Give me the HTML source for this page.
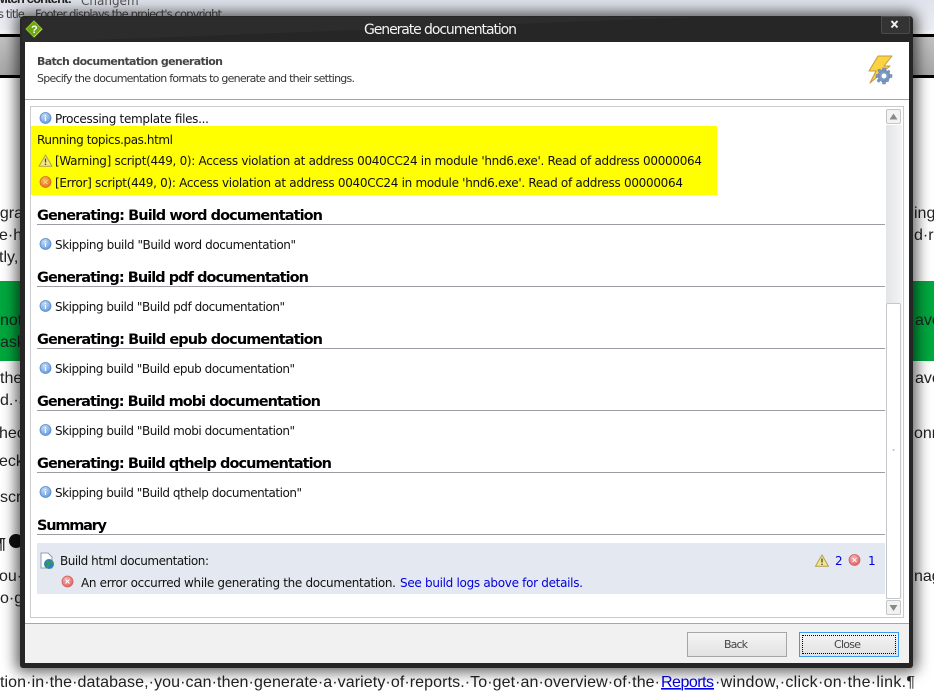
<!DOCTYPE html>
<html><head><meta charset="utf-8"><style>
html,body{margin:0;padding:0;width:934px;height:693px;overflow:hidden;background:#fff}
.a{position:absolute}
svg{position:absolute;left:0;top:0}
text{font-family:"DejaVu Sans","Liberation Sans",sans-serif;font-size:12px;fill:#111;white-space:pre}
.b{font-weight:bold;font-size:14.5px;fill:#000}
.bg{font-family:"Liberation Sans",sans-serif;font-size:16px;fill:#222}
.u{fill:#0000e0}
</style></head><body>
<div class="a" style="left:0;top:0;width:934px;height:30px;background:linear-gradient(#dfe3ec,#eceef3)"></div>
<div class="a" style="left:0;top:30px;width:934px;height:4px;background:#f4f4f6"></div>
<div class="a" style="left:0;top:34px;width:934px;height:44px;box-sizing:border-box;border-top:3px solid #000;border-bottom:3px solid #000;background:linear-gradient(#c2c2c2,#a6a6a6)"></div>
<div class="a" style="left:0;top:281px;width:934px;height:80px;background:#00a83e"></div>

<!-- background text, beneath the dialog and its shadow -->
<svg width="934" height="693" viewBox="0 0 934 693">
<text x="-5" y="3" textLength="77" style="font-family:'Liberation Sans',sans-serif;font-size:13px;font-weight:bold;fill:#222">witch content:</text><text x="81" y="5" style="font-size:12px;fill:#555">Changem</text>
<text x="-2" y="18" style="font-size:11.5px;fill:#444" textLength="224">s title    Footer displays the project's copyright</text>
<text x="-9" y="218" class="bg">ogram</text><text x="-1" y="240" class="bg">e·h</text><text x="-1" y="262" class="bg">tly,</text>
<text x="0" y="325" class="bg">not</text><text x="0" y="347" class="bg">ask</text><text x="0" y="383" class="bg">the</text><text x="0" y="405" class="bg">d.·S</text>
<text x="-1" y="438" class="bg">hec</text><text x="-1" y="466" class="bg">eck</text><text x="0" y="502" class="bg">scr</text>
<text x="-3" y="549" class="bg" style="font-weight:bold">¶</text><circle cx="16" cy="541" r="7" fill="#111"/>
<text x="-1" y="581" class="bg">ou·c</text><text x="0" y="603" class="bg">o·g</text>
<text x="914" y="218" class="bg">ing</text><text x="914" y="240" class="bg">d·re</text><text x="915" y="325" class="bg">ave</text><text x="915" y="383" class="bg">ave</text><text x="914" y="438" class="bg">onn</text><text x="914" y="581" class="bg">nag</text>
<text x="0" y="687" class="bg" textLength="660">tion·in·the·database,·you·can·then·generate·a·variety·of·reports.·To·get·an·overview·of·the·</text>
<text x="661" y="687" class="bg" textLength="53" style="fill:#0000e0;text-decoration:underline">Reports</text>
<text x="715" y="687" class="bg" textLength="200">·window,·click·on·the·link.¶</text>
</svg>

<div class="a" style="left:20px;top:16px;width:893px;height:652px;background:#262626;border-radius:4px 4px 3px 3px;box-shadow:0 0 14px 4px rgba(0,0,0,.62)"></div>
<div class="a" style="left:25px;top:42px;width:884px;height:621px;background:#fff"></div>
<div class="a" style="left:25px;top:99px;width:884px;height:1px;background:#a3a6a8"></div>
<div class="a" style="left:30px;top:106px;width:874px;height:512px;box-sizing:border-box;border:1px solid #c9cccf;background:#fff"></div>
<div class="a" style="left:25px;top:623px;width:884px;height:40px;box-sizing:border-box;border-top:1px solid #a3a8aa;background:#f1f1f1"></div>
<div class="a" style="left:881px;top:16px;width:27px;height:16px;background:#333;border:1px solid #4a4a4a;border-radius:0 0 2px 2px"></div>
<div class="a" style="left:31px;top:126px;width:686px;height:69px;background:#ff0"></div>
<div class="a" style="left:37px;top:543px;width:848px;height:51px;background:#e4e8f0"></div>
<div class="a" style="left:886px;top:125px;width:16px;height:474px;background:linear-gradient(90deg,#e4e5e7,#f4f4f5)"></div>
<div class="a" style="left:886px;top:109px;width:15px;height:15px;box-sizing:border-box;border:1px solid #c4c6c8;border-radius:2px;background:#f2f2f2"></div>
<div class="a" style="left:886px;top:303px;width:15px;height:296px;box-sizing:border-box;border:1px solid #c4c8cc;border-radius:2px;background:#fff"></div>
<div class="a" style="left:886px;top:600px;width:15px;height:15px;box-sizing:border-box;border:1px solid #c4c6c8;border-radius:2px;background:#f2f2f2"></div>
<div class="a" style="left:687px;top:632px;width:100px;height:25px;box-sizing:border-box;border:1px solid #a6a6a6;background:linear-gradient(#f4f4f4,#e2e2e2)"></div>
<div class="a" style="left:799px;top:632px;width:100px;height:25px;box-sizing:border-box;border:1px solid #3a9df0;background:linear-gradient(#f4f4f4,#e2e2e2)"><div style="position:absolute;left:2px;top:2px;right:2px;bottom:2px;border:1px dotted #000"></div></div>
<svg width="934" height="693" viewBox="0 0 934 693">
<defs>
<radialGradient id="ib" cx=".4" cy=".3" r=".8"><stop offset="0" stop-color="#c4dcf6"/><stop offset="1" stop-color="#5c94d8"/></radialGradient>
<radialGradient id="rd" cx=".4" cy=".3" r=".8"><stop offset="0" stop-color="#f8b0b0"/><stop offset="1" stop-color="#e05a5a"/></radialGradient>
<radialGradient id="or" cx=".4" cy=".3" r=".8"><stop offset="0" stop-color="#fbb060"/><stop offset="1" stop-color="#e86e10"/></radialGradient>
<g id="i"><circle r="5.5" fill="url(#ib)" stroke="#5a8ac8" stroke-width=".8"/><path d="M0-3v1M0-1v4" stroke="#fff" stroke-width="1.2"/></g>
<g id="e"><circle r="5.5" fill="url(#rd)" stroke="#d06060" stroke-width=".8"/><path d="M-2-2L2 2M2-2L-2 2" stroke="#fff" stroke-width="1"/></g>
<g id="w"><path d="M0-6L6.5 5.2H-6.5Z" fill="#f2e68a" stroke="#b0a050" stroke-width="1" stroke-linejoin="round"/><path d="M0-2.5V1.5M0 2.6V4" stroke="#444" stroke-width="1.3"/></g>
</defs>

<!-- title -->
<path d="M22 20 L33 17 L700 17 L40 42 L22 42Z" fill="#3a3a3a" opacity=".35"/>
<text x="364" y="34" textLength="153" style="font-size:14px;fill:#f4f4f4">Generate documentation</text>
<path d="M34 21L42 29L34 37L26 29Z" fill="#6ea614" stroke="#8cc21e" stroke-width="1"/>
<path d="M34 37L42 29" stroke="#b8dc50" stroke-width="1"/>
<text x="31" y="33" style="font-family:'Liberation Sans',sans-serif;font-size:11px;font-weight:bold;fill:#fff">?</text>
<path d="M891.500 21L897.500 27.500M897.500 21L891.500 27.500" stroke="#eee" stroke-width="2"/>

<!-- header -->
<text x="37" y="65" textLength="186" style="font-size:11px;font-weight:bold;fill:#444">Batch documentation generation</text>
<text x="37" y="82" textLength="318" style="font-size:11px;fill:#333">Specify the documentation formats to generate and their settings.</text>
<path d="M878 56H892L884 66H890L870 83L876 71H869Z" fill="#fbd340" stroke="#c09a40" stroke-width="1" stroke-linejoin="round"/>
<g fill="#7f9ac4" stroke="#5f7aa4" stroke-width=".5"><circle cx="884" cy="76" r="6"/><path d="M882.500 68h3v3h-3zM882.500 81h3v3h-3zM876 74.500h3v3h-3zM889 74.500h3v3h-3zM877.500 70l2.500-1 1.500 2-2 2zM889 81l-2 1-2-2 2-1.500zM877 81l1-2 2 1.500-1 2zM889 70l1 2-2 1.500-1-2z"/></g>
<circle cx="884" cy="76" r="2.500" fill="#fff"/>

<!-- log -->
<use href="#i" x="45.500" y="118"/>
<text x="55" y="123" textLength="154">Processing template files...</text>
<text x="37" y="144" textLength="136">Running topics.pas.html</text>
<use href="#w" x="45.500" y="161"/>
<text x="55" y="165" textLength="647">[Warning] script(449, 0): Access violation at address 0040CC24 in module 'hnd6.exe'. Read of address 00000064</text>
<circle cx="45.500" cy="182" r="5.500" fill="url(#or)" stroke="#d07020" stroke-width=".8"/><path d="M43.500 180L47.500 184M47.500 180L43.500 184" stroke="#ffd080" stroke-width="1"/>
<text x="55" y="187" textLength="628">[Error] script(449, 0): Access violation at address 0040CC24 in module 'hnd6.exe'. Read of address 00000064</text>

<text class="b" x="37" y="220" textLength="286">Generating: Build word documentation</text>
<rect x="37" y="224" width="848" height="1" fill="#9a9ea2"/>
<use href="#i" x="45.500" y="244"/><text x="55" y="249" textLength="241">Skipping build "Build word documentation"</text>

<text class="b" x="37" y="282" textLength="272">Generating: Build pdf documentation</text>
<rect x="37" y="286" width="848" height="1" fill="#9a9ea2"/>
<use href="#i" x="45.500" y="306"/><text x="55" y="311" textLength="230">Skipping build "Build pdf documentation"</text>

<text class="b" x="37" y="344" textLength="286">Generating: Build epub documentation</text>
<rect x="37" y="348" width="848" height="1" fill="#9a9ea2"/>
<use href="#i" x="45.500" y="368"/><text x="55" y="373" textLength="240">Skipping build "Build epub documentation"</text>

<text class="b" x="37" y="406" textLength="284">Generating: Build mobi documentation</text>
<rect x="37" y="410" width="848" height="1" fill="#9a9ea2"/>
<use href="#i" x="45.500" y="430"/><text x="55" y="435" textLength="240">Skipping build "Build mobi documentation"</text>

<text class="b" x="37" y="468" textLength="295">Generating: Build qthelp documentation</text>
<rect x="37" y="472" width="848" height="1" fill="#9a9ea2"/>
<use href="#i" x="45.500" y="492"/><text x="55" y="497" textLength="247">Skipping build "Build qthelp documentation"</text>

<text class="b" x="37" y="530" textLength="70">Summary</text>
<rect x="37" y="534" width="848" height="1" fill="#9a9ea2"/>

<!-- summary -->
<path d="M41 553H48L52 557V568H41Z" fill="#fff" stroke="#8ea0b8" stroke-width="1"/>
<circle cx="49" cy="564" r="5" fill="#2f7fb8"/><path d="M46 561.500c2.500 0 3.500 1 3 2.500s-2 1.500-2.500 3.500M51 560.500c.5 1.500 1.500 2.500 2 3.500" stroke="#3aa040" stroke-width="1.800" fill="none"/>
<text x="60" y="565" textLength="149">Build html documentation:</text>
<use href="#e" x="67.500" y="581.500"/>
<text x="81" y="587" textLength="315">An error occurred while generating the documentation.</text>
<text x="400" y="587" textLength="183" class="u">See build logs above for details.</text>
<use href="#w" x="822" y="561"/>
<text x="835" y="565" class="u">2</text>
<use href="#e" x="854.500" y="560"/>
<text x="868" y="565" class="u">1</text>

<!-- scrollbar glyphs -->
<path d="M893.500 113.500L897.500 119.500H889.500Z" fill="#8a8a8a"/>
<path d="M893.500 611L897.500 605H889.500Z" fill="#8a8a8a"/>
<circle cx="893.500" cy="450" r="1" fill="#c0c0c0"/>

<!-- buttons -->
<text x="724" y="648" textLength="24" style="font-size:11px;fill:#444">Back</text>
<text x="834" y="648" textLength="27" style="font-size:11px;fill:#444">Close</text>
</svg>
</body></html>
